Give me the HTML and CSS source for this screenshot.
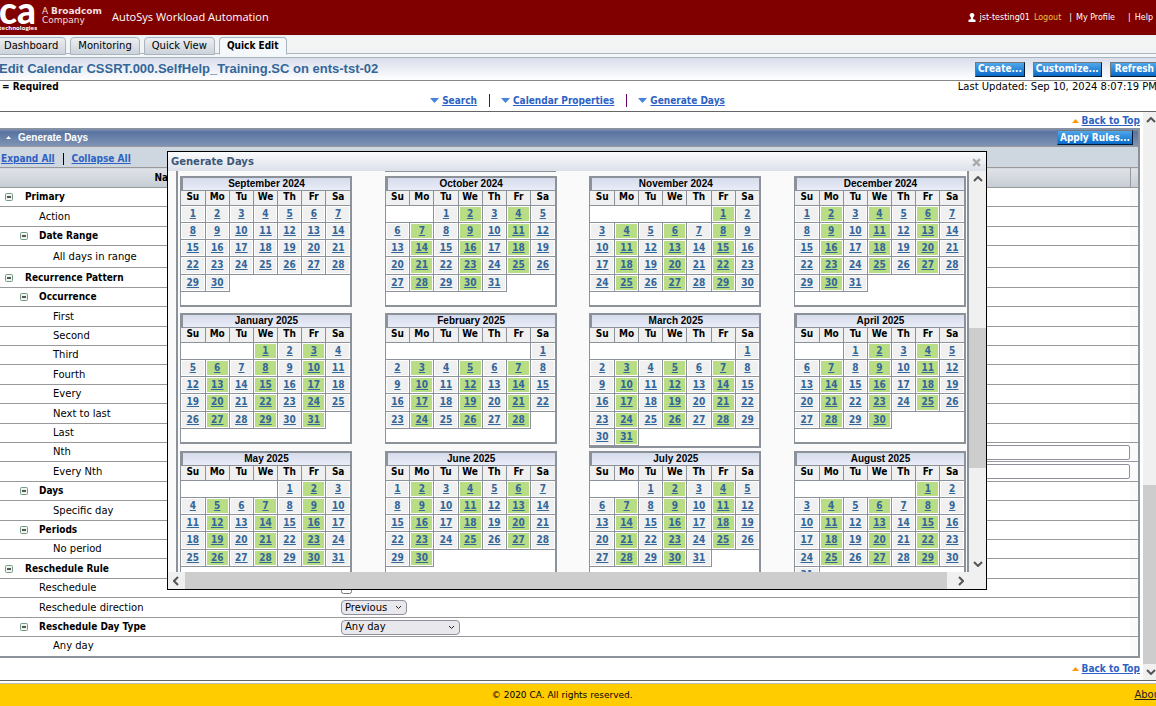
FILE: index.html
```html
<!DOCTYPE html>
<html lang="en">
<head>
<meta charset="utf-8">
<title>AutoSys Workload Automation</title>
<link rel="stylesheet" href="styles.css">
</head>
<body>
<header class="banner">
  <div class="logo">
    <div class="logo-mark"><span class="logo-ca">ca</span><span class="logo-tech">technologies</span></div>
    <div class="logo-owner">A <b>Broadcom</b><br>Company</div>
  </div>
  <div class="product">AutoSys Workload Automation</div>
  <nav class="user-nav">
    <svg class="user-icon" viewBox="0 0 8 10" aria-hidden="true"><path d="M4 0a2.2 2.2 0 0 1 1.4 4l-.4 1 .3 1.200 2.200.6V9H.5V6.800l2.200-.6.3-1.200-.4-1A2.200 2.200 0 0 1 4 0z"/></svg>
    <span>jst-testing01</span>
    <a class="logout" href="#logout">Logout</a>
    <span class="bar">|</span><a class="profile" href="#profile">My Profile</a>
    <span class="bar">|</span><a href="#help">Help</a>
  </nav>
</header>
<nav class="tabs">
  <a class="tab tab-first" href="#dashboard">Dashboard</a>
  <a class="tab" href="#monitoring">Monitoring</a>
  <a class="tab" href="#view">Quick View</a>
  <a class="tab tab-active" href="#edit">Quick Edit</a>
</nav>
<section class="titlebar">
  <h1>Edit Calendar CSSRT.000.SelfHelp_Training.SC on ents-tst-02</h1>
  <div class="actions">
    <button class="btn">Create...</button>
    <button class="btn">Customize...</button>
    <button class="btn btn-refresh">Refresh</button>
  </div>
</section>
<section class="info">
  <div class="info-row"><b>= Required</b><span class="updated">Last Updated: Sep 10, 2024 8:07:19 PM</span></div>
  <nav class="jumps">
    <span class="jump"><svg class="down" viewBox="0 0 9 5" aria-hidden="true"><path d="M0 0h9L4.500 5z"/></svg><a href="#search">Search</a></span>
    <span class="jump"><svg class="down" viewBox="0 0 9 5" aria-hidden="true"><path d="M0 0h9L4.500 5z"/></svg><a href="#properties">Calendar Properties</a></span>
    <span class="jump"><svg class="down" viewBox="0 0 9 5" aria-hidden="true"><path d="M0 0h9L4.500 5z"/></svg><a href="#generate">Generate Days</a></span>
  </nav>
</section>
<main class="scroller">
  <div class="content">
    <div class="to-top"><svg class="up" viewBox="0 0 7 4" aria-hidden="true"><path d="M0 4h7L3.500 0z"/></svg><a href="#top">Back to Top</a></div>
    <section class="panel" id="generate">
      <div class="panel-head">
        <svg class="collapse" viewBox="0 0 5 3" aria-hidden="true"><path d="M0 3h5L2.500 0z"/></svg>
        <h2>Generate Days</h2>
        <button class="btn">Apply Rules...</button>
      </div>
      <div class="toolbar"><a href="#expand">Expand All</a><span class="divider"></span><a href="#collapse">Collapse All</a></div>
      <table class="rules">
        <colgroup><col class="c-name"><col><col class="c-end"></colgroup>
        <thead><tr><th>Name</th><th></th><th></th></tr></thead>
        <tbody class="primary">
          <tr class="l0"><th scope="row">Primary</th><td></td><td></td></tr>
          <tr class="l1"><td>Action</td><td></td><td></td></tr>
          <tr class="l1"><th scope="row">Date Range</th><td></td><td></td></tr>
          <tr class="l2"><td>All days in range</td><td></td><td></td></tr>
        </tbody>
        <tbody class="rest">
          <tr class="l0"><th scope="row">Recurrence Pattern</th><td></td><td></td></tr>
          <tr class="l1"><th scope="row">Occurrence</th><td></td><td></td></tr>
          <tr class="l2"><td>First</td><td></td><td></td></tr>
          <tr class="l2"><td>Second</td><td></td><td></td></tr>
          <tr class="l2"><td>Third</td><td></td><td></td></tr>
          <tr class="l2"><td>Fourth</td><td></td><td></td></tr>
          <tr class="l2"><td>Every</td><td></td><td></td></tr>
          <tr class="l2"><td>Next to last</td><td></td><td></td></tr>
          <tr class="l2"><td>Last</td><td></td><td></td></tr>
          <tr class="l2"><td><label for="nth">Nth</label></td><td><input class="field" id="nth" type="text"></td><td></td></tr>
          <tr class="l2"><td><label for="every-nth">Every Nth</label></td><td><input class="field" id="every-nth" type="text"></td><td></td></tr>
          <tr class="l1"><th scope="row">Days</th><td></td><td></td></tr>
          <tr class="l2"><td>Specific day</td><td></td><td></td></tr>
          <tr class="l1"><th scope="row">Periods</th><td></td><td></td></tr>
          <tr class="l2"><td>No period</td><td></td><td></td></tr>
          <tr class="l0"><th scope="row">Reschedule Rule</th><td></td><td></td></tr>
          <tr class="l1"><td><label for="resched">Reschedule</label></td><td><input class="check" id="resched" type="checkbox"></td><td></td></tr>
          <tr class="l1"><td><label for="dir">Reschedule direction</label></td><td><select class="pick" id="dir"><option>Previous</option><option>Next</option></select></td><td></td></tr>
          <tr class="l1"><th scope="row"><label for="daytype">Reschedule Day Type</label></th><td><select class="pick pick-wide" id="daytype"><option>Any day</option></select></td><td></td></tr>
          <tr class="l2"><td>Any day</td><td></td><td></td></tr>
        </tbody>
      </table>
    </section>
    <div class="to-top to-top-end"><svg class="up" viewBox="0 0 7 4" aria-hidden="true"><path d="M0 4h7L3.500 0z"/></svg><a href="#top">Back to Top</a></div>
  </div>
  <div class="vbar page-vbar" aria-hidden="true">
    <svg viewBox="0 0 10 6"><path d="M1 5l4-4 4 4"/></svg>
    <div class="track"><div class="before"></div><div class="thumb"></div></div>
    <svg viewBox="0 0 10 6"><path d="M1 1l4 4 4-4"/></svg>
  </div>
</main>
<footer class="footer"><span class="copy">© 2020 CA. All rights reserved.</span><a href="#about">About</a></footer>

<div class="dialog" role="dialog" aria-labelledby="dlg-title">
  <div class="dialog-head"><h2 id="dlg-title">Generate Days</h2>
    <button class="close" aria-label="Close"><svg viewBox="0 0 8 8"><path d="M1 1l6 6M7 1L1 7"/></svg></button></div>
  <div class="dialog-main">
    <div class="pane"><div class="months" id="months"><div class="prev-edge"></div></div></div>
    <div class="vbar dialog-vbar" aria-hidden="true">
      <svg viewBox="0 0 10 6"><path d="M1 5l4-4 4 4"/></svg>
      <div class="track"><div class="before"></div><div class="thumb"></div><div class="after"></div></div>
      <svg viewBox="0 0 10 6"><path d="M1 1l4 4 4-4"/></svg>
    </div>
  </div>
  <div class="hbar" aria-hidden="true">
    <svg viewBox="0 0 6 10"><path d="M5 1L1 5l4 4"/></svg>
    <div class="hthumb"></div>
    <svg viewBox="0 0 6 10"><path d="M1 1l4 4-4 4"/></svg>
  </div>
</div>
<script src="calendar.js"></script>
</body>
</html>
```
FILE: styles.css
```css
* { box-sizing: border-box; }
body {
  margin: 0; height: 100vh; display: flex; flex-direction: column; overflow: hidden;
  position: relative; background: #fff; color: #000;
  font: 10px/14px "DejaVu Sans", sans-serif;
}
h1, h2 { margin: 0; font-weight: bold; }
button { font: inherit; }
svg { display: block; flex: none; }
a { color: #2d62c4; }
b, th, .jumps, .to-top, .toolbar, .btn { font-family: "DejaVu Sans Condensed", "DejaVu Sans", sans-serif; font-weight: bold; }

.banner { flex: none; height: 35px; display: flex; align-items: center; background: #800000; color: #fff; }
.logo { display: flex; width: 112px; gap: 5px; }
.logo-mark { display: flex; flex-direction: column; width: 38px; height: 35px; margin-left: -1px; }
.logo-ca { font: 900 37px/20px Lato, sans-serif; height: 25px; }
.logo-tech { font: bold 6px/7px "Open Sans", sans-serif; }
.logo-owner { font: 9px/9px "DejaVu Sans", sans-serif; padding-top: 7px; color: #f3dede; white-space: nowrap; }
.logo-owner b { font-family: "DejaVu Sans", sans-serif; }
.product { font: 11px/16px "Open Sans", sans-serif; padding-bottom: 2px; }
.user-nav { margin-left: auto; display: flex; align-items: center; gap: 4px; font-size: 8px; padding-right: 3px; white-space: nowrap; }
.user-nav a { color: #fff; text-decoration: none; }
.user-nav .logout { color: #f0c040; }
.user-nav .bar { margin-left: 4px; }
.user-nav .profile { margin-right: 5px; }
.user-icon { width: 8px; height: 10px; fill: #fff; }

.tabs { flex: none; height: 23px; padding-top: 2px; display: flex; align-items: flex-start; gap: 4px; background: linear-gradient(#e9eef0, #f3f5f5 3px, #f1f4f4 18px, #aab4bf 18px, #aab4bf 19px, #f4f7fa 19px); border-bottom: 1px solid #aab4bf; }
.tab { height: 18px; padding: 0 7px; border: 1px solid #aab4bf; border-radius: 4px 4px 0 0; background: linear-gradient(#eceff2, #ccd2da); color: #000; text-decoration: none; line-height: 16px; }
.tab-first { margin-left: -4px; }
.tab-active { font-family: "DejaVu Sans Condensed", sans-serif; font-weight: bold; background: #f5f8fa; border-bottom-color: #f5f8fa; }

.titlebar { flex: none; height: 23px; display: flex; align-items: center; justify-content: space-between; background: linear-gradient(#d9deec, #fff); border-bottom: 1px solid #888; }
.titlebar h1 { font: bold 13px/18px "Liberation Sans", sans-serif; color: #336699; margin-left: -1px; white-space: nowrap; }
.actions { display: flex; gap: 8px; margin-right: -3px; }
.btn { height: 15px; padding: 0 2px; border: 1px solid #777; border-right-color: #001a33; border-bottom-color: #001a33; background: linear-gradient(#4fa6ea, #0a6bc8); color: #fff; line-height: 12px; white-space: nowrap; }
.btn-refresh { padding: 0 4px; }

.info { flex: none; height: 31px; border-bottom: 1px solid #666; }
.info-row { display: flex; justify-content: space-between; height: 13px; line-height: 12px; padding-left: 2px; white-space: nowrap; }
.updated { margin-right: -1px; }
.jumps { display: flex; justify-content: center; height: 13px; line-height: 14px; }
.jump { display: flex; align-items: center; gap: 3px; padding: 0 12px 0 11px; }
.jump + .jump { border-left: 1px solid #606; }
.down { width: 9px; height: 5px; fill: #4583dc; }

.scroller { flex: 1; min-height: 0; display: flex; border-bottom: 1px solid #666; overflow: hidden; }
.content { flex: 1; min-width: 0; padding-right: 3px; }
.to-top { display: flex; justify-content: flex-end; align-items: center; gap: 3px; height: 16px; padding-top: 2px; }
.to-top-end { height: 22px; padding-top: 0; }
.up { width: 7px; height: 4px; fill: #f90; }
.panel { border: solid #8b9299; border-width: 1px 2px 2px 0; }
.panel-head { display: flex; align-items: center; height: 18px; padding: 0 5px 0 6px; background: linear-gradient(#8596b4, #5a739f 3px, #7f94b5); border-bottom: 1px solid #999; color: #fff; }
.panel-head h2 { font: bold 10px/16px "Liberation Sans", sans-serif; margin: 0 auto 0 7px; }
.collapse { width: 5px; height: 3px; fill: #fff; }
.toolbar { display: flex; align-items: center; gap: 8px; height: 20px; padding-left: 1px; padding-top: 3px; background: #ced6e0; }
.divider { width: 1px; height: 12px; background: #000; }

.rules { width: 100%; border-collapse: collapse; table-layout: fixed; }
.c-name { width: 338px; }
.c-end { width: 8px; }
.rules thead th { height: 20px; background: linear-gradient(#e0e3e8, #c6ccd4); border-top: 1px solid #999; border-right: 1px solid #999; }
.rules thead th:first-child { border-right: 0; }
.rules thead th:nth-child(3) { border-right: 0; }
.rules th, .rules td { padding: 0; line-height: 12px; border-bottom: 1px solid #999; text-align: left; }
.rules thead th:first-child { text-align: center; }
.rules tbody td:last-child { background: #fafafa; }
.primary tr { height: 19px; }
.primary tr:nth-child(2) { height: 20px; }
.primary tr:nth-child(4) { height: 22px; }
.rest tr { height: 19px; }
.rest tr:nth-child(5n+1), .rest tr:nth-child(5n+3) { height: 20px; }
.rest tr:last-child > * { border-bottom: 0; }
.rules .l0 > :first-child { padding-left: 25px; }
.rules .l1 > :first-child { padding-left: 39px; }
.rules .l2 > :first-child { padding-left: 53px; }
.rules tbody th {
  background: url("data:image/svg+xml,%3Csvg xmlns='http://www.w3.org/2000/svg' width='8' height='8'%3E%3Crect x='.5' y='.5' width='7' height='7' rx='1' fill='%23eef4ee' stroke='%23769a84'/%3E%3Cpath d='M2 4h4' stroke='%23222' stroke-width='1.500'/%3E%3C/svg%3E") no-repeat 5px center;
}
.rules .l1 th { background-position-x: 20px; }
.field { display: block; width: 100%; height: 15px; padding: 0 3px; border: 1px solid #8f8f9d; border-radius: 2px; margin: 0; }
.check { display: block; width: 11px; height: 11px; margin: 0 0 0 3px; }
.pick { display: block; width: 66px; height: 15px; margin-left: 3px; padding: 0 3px; border: 1px solid #8f8f9d; border-radius: 4px; color: #000; font: inherit; line-height: 12px; appearance: none;
  background: #e9e9ed url("data:image/svg+xml,%3Csvg xmlns='http://www.w3.org/2000/svg' width='7' height='5'%3E%3Cpath d='M1 1l2.500 2.500L6 1' fill='none' stroke='%23222'/%3E%3C/svg%3E") no-repeat right 4px center; }
.pick-wide { width: 119px; }

.vbar { flex: none; display: flex; flex-direction: column; align-items: center; background: #f0f0f0; }
.vbar svg { width: 10px; height: 6px; margin: 5px 0; }
.vbar path, .hbar path { fill: none; stroke: #555; stroke-width: 2; }
.track { flex: 1; align-self: stretch; display: flex; flex-direction: column; }
.thumb, .hthumb { background: #cdcdcd; }
.page-vbar { width: 13px; }
.page-vbar svg { margin-left: 3px; }
.page-vbar .before { flex: 356; }
.page-vbar .thumb { flex: 179; }

.footer { flex: none; height: 25px; display: flex; align-items: center; background: #fc0; border-top: 2px solid #fff; box-shadow: inset 0 1px #bbb; }
.copy { flex: 1; text-align: center; padding-right: 10px; font-size: 9px; }
.footer a { color: #222; margin-right: -8px; }

.dialog { position: absolute; left: 167px; top: 151px; width: 820px; height: 439px; display: flex; flex-direction: column; border: 1px solid #000; background: #fafafa; }
.dialog-head { flex: none; height: 19px; display: flex; align-items: center; justify-content: space-between; padding: 1px 5px 0 3px; background: linear-gradient(#fafbfc, #dbe0e9); }
.dialog-head h2 { font-size: 10px; color: #405676; }
.close { border: 0; background: none; padding: 0; }
.close svg { width: 9px; height: 9px; }
.close path { fill: none; stroke: #aaa; stroke-width: 2; }
.dialog-main { flex: 1; min-height: 0; display: flex; }
.pane { flex: 1; min-width: 0; overflow: hidden; margin-left: 8px; border: solid #8b9299; border-width: 0 2px; padding-left: 2px; }
.months { display: grid; grid-template-columns: repeat(3, 1fr) 173px; grid-template-rows: 5px; grid-auto-rows: 137px 138px; align-items: start; }
.prev-edge { grid-column: 2; width: 171px; border-top: 1px solid #8b9299; }
.dialog-vbar { width: 17px; }
.dialog-vbar .before { flex: 141; }
.dialog-vbar .thumb { flex: 139; }
.dialog-vbar .after { flex: 88; }
.hbar { flex: none; height: 17px; display: flex; align-items: center; background: #f0f0f0; padding-right: 22px; }
.hbar svg { width: 6px; height: 10px; margin-left: 5px; }
.hthumb { flex: 1; align-self: stretch; margin: 0 6px; }

.month { width: 172px; min-height: 131px; border: 2px solid #8b9299; border-left-width: 1px; background: #fff; }
.month table { width: 100%; border-collapse: collapse; table-layout: fixed; }
.month caption { height: 13px; background: linear-gradient(#d7dcec, #e9ecf8); border-bottom: 1px solid #8b9299; border-left: 2px solid #8b9299; font: bold 10px/12px "Liberation Sans", sans-serif; }
.month th, .month td { padding: 0; text-align: center; line-height: 12px; border-right: 1px solid #8b9299; border-bottom: 1px solid #8b9299; }
.month th { height: 14px; line-height: 12px; vertical-align: top; background: #f0f0f0; }
.month th:last-child, .month td:last-child { border-right: 0; }
.month td { height: 17px; }
.month tr:nth-child(4) td { height: 18px; }
.month .day { background: #f0f0f0; box-shadow: inset 0 0 0 1px #fff; }
.month .on { background: #b9dd85; }
.month .tail { border-bottom: 0; }
.day a { font-family: "DejaVu Sans Condensed", sans-serif; font-weight: bold; color: #369; }
```
FILE: calendar.js
```js
const names = ["January", "February", "March", "April", "May", "June", "July",
  "August", "September", "October", "November", "December"];
const firstRun = new Date(2024, 9, 1);
const runDays = [1, 3, 5];
const grid = document.getElementById("months");

function buildMonth(year, month) {
  const lead = new Date(year, month, 1).getDay();
  const count = new Date(year, month + 1, 0).getDate();
  let html = "<table><caption>" + names[month] + " " + year + "</caption><thead><tr>";
  for (const d of ["Su", "Mo", "Tu", "We", "Th", "Fr", "Sa"]) html += '<th scope="col">' + d + "</th>";
  html += "</tr></thead><tbody><tr>";
  if (lead) html += '<td colspan="' + lead + '"></td>';
  for (let d = 1; d <= count; d++) {
    const date = new Date(year, month, d);
    const weekday = date.getDay();
    if (weekday === 0 && d > 1) html += "</tr><tr>";
    const on = date >= firstRun && runDays.includes(weekday);
    html += '<td class="day' + (on ? " on" : "") + '"><a href="#day">' + d + "</a></td>";
  }
  const left = (7 - (lead + count) % 7) % 7;
  if (left) html += '<td class="tail" colspan="' + left + '"></td>';
  html += "</tr></tbody></table>";
  const box = document.createElement("div");
  box.className = "month";
  box.innerHTML = html;
  grid.append(box);
  return box;
}

for (let i = 0; i < 12; i++) {
  const start = new Date(2024, 8 + i, 1);
  const box = buildMonth(start.getFullYear(), start.getMonth());
  box.style.gridRow = Math.floor(i / 4) + 2;
  box.style.gridColumn = i % 4 + 1;
}
```
